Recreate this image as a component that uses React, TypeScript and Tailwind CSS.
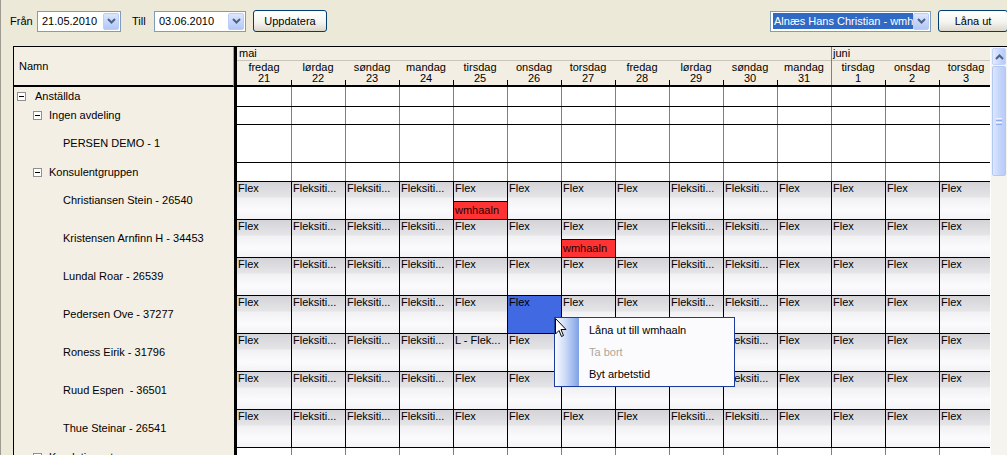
import React from 'react';

const days = [
  { name: 'fredag', num: 21 },
  { name: 'lørdag', num: 22 },
  { name: 'søndag', num: 23 },
  { name: 'mandag', num: 24 },
  { name: 'tirsdag', num: 25 },
  { name: 'onsdag', num: 26 },
  { name: 'torsdag', num: 27 },
  { name: 'fredag', num: 28 },
  { name: 'lørdag', num: 29 },
  { name: 'søndag', num: 30 },
  { name: 'mandag', num: 31 },
];

const juneDays = [
  { name: 'tirsdag', num: 1 },
  { name: 'onsdag', num: 2 },
  { name: 'torsdag', num: 3 },
];

const shifts = ['Flex', 'Fleksiti...', 'Fleksiti...', 'Fleksiti...', 'Flex', 'Flex', 'Flex', 'Flex', 'Fleksiti...', 'Fleksiti...', 'Flex', 'Flex', 'Flex', 'Flex'];

type Employee = { name: string; red?: number; selected?: number; override?: Record<number, string> };

const employees: Employee[] = [
  { name: 'Christiansen Stein - 26540', red: 4 },
  { name: 'Kristensen Arnfinn H - 34453', red: 6 },
  { name: 'Lundal Roar - 26539' },
  { name: 'Pedersen Ove - 37277', selected: 5 },
  { name: 'Roness Eirik - 31796', override: { 4: 'L - Flek...' } },
  { name: 'Ruud Espen  - 36501' },
  { name: 'Thue Steinar - 26541' },
];

function Chevron({ up }: { up?: boolean }) {
  return (
    <svg width="9" height="6" viewBox="0 0 9 6">
      <path d={up ? 'M1 5 L4.5 1.5 L8 5' : 'M1 1 L4.5 4.5 L8 1'} stroke="#4d6185" strokeWidth="2" fill="none" />
    </svg>
  );
}

function DropButton() {
  return (
    <div className="mr-px flex h-[17px] w-[16px] shrink-0 items-center justify-center rounded-[2px] border border-[#bccdf6] bg-[linear-gradient(to_bottom,#dce6fd,#c3d4fb_60%,#b3c7f6)]">
      <Chevron />
    </div>
  );
}

function Combo({ value, width }: { value: string; width: string }) {
  return (
    <div className={`flex h-[21px] shrink-0 items-center border border-[#7f9db9] bg-white pl-[4px] ${width}`}>
      <span className="flex-1 overflow-hidden whitespace-nowrap">{value}</span>
      <DropButton />
    </div>
  );
}

function XpButton({ label, width }: { label: string; width: string }) {
  return (
    <div className={`flex h-[22px] shrink-0 items-center justify-center rounded-[3px] border border-[#003c74] bg-[linear-gradient(to_bottom,#ffffff,#f4f4f0_55%,#dcd7cb)] ${width}`}>
      {label}
    </div>
  );
}

function MinusBox() {
  return (
    <div className="flex h-[9px] w-[9px] shrink-0 items-center justify-center border border-[#8f8f8f] bg-white">
      <div className="h-px w-[5px] bg-black" />
    </div>
  );
}

function DayHeader({ name, num, first }: { name: string; num: number; first?: boolean }) {
  return (
    <div className="relative flex h-[25px] w-[54px] shrink-0 flex-col items-center pt-px">
      <span className="leading-[11px]">{name}</span>
      <span className="leading-[11px]">{num}</span>
      {!first && <div className="absolute bottom-0 left-0 h-[6px] w-px bg-black" />}
    </div>
  );
}

function EmptyRow({ height, first }: { height: string; first?: boolean }) {
  return (
    <div className={`flex bg-white ${height} ${first ? '' : 'border-t border-black'}`}>
      {shifts.map((_, i) => (
        <div key={i} className={`h-full w-[54px] shrink-0 ${i === 0 ? '' : 'border-l border-[#808080]'}`} />
      ))}
    </div>
  );
}

function ShiftRow({ emp }: { emp: Employee }) {
  return (
    <div className="flex h-[38px] border-t border-black bg-[linear-gradient(to_bottom,#d4d4d8_0px,#e5e5e8_15px,#f1f1f4_16px,#fbfbfd_28px,#f3f3f6_37px)]">
      {shifts.map((s, i) => {
        const text = emp.override?.[i] ?? s;
        const selected = emp.selected === i;
        return (
          <div key={i} className={`flex h-full w-[54px] shrink-0 flex-col ${i === 0 ? '' : 'border-l border-black'} ${selected ? 'bg-[#4169e1]' : ''}`}>
            <div className="h-[19px] overflow-hidden whitespace-nowrap pl-px leading-[13px]">{text}</div>
            {emp.red === i && (
              <div className="flex flex-1 items-center border-t border-black bg-[#ff3333] pl-px text-[#2a0000]">wmhaaln</div>
            )}
          </div>
        );
      })}
    </div>
  );
}

export default function App() {
  return (
    <div className="relative h-[455px] w-[1007px] overflow-hidden border-l border-[#9d9a8f] bg-[#ece9d8] font-['Liberation_Sans',Arial,sans-serif] text-[11px] text-black">
      {/* toolbar */}
      <div className="flex h-[46px] items-start pl-[9px] pt-[10px]">
        <div className="flex h-[22px] items-center">
          <span className="w-[27px] shrink-0">Från</span>
          <Combo value="21.05.2010" width="w-[84px]" />
          <span className="ml-[11px] w-[22px] shrink-0">Till</span>
          <Combo value="03.06.2010" width="w-[92px]" />
          <div className="ml-[7px]">
            <XpButton label="Uppdatera" width="w-[74px]" />
          </div>
          <div className="ml-[443px] flex h-[21px] w-[161px] shrink-0 items-center border border-[#7f9db9] bg-white pl-[2px]">
            <span className="flex h-[16px] flex-1 items-center overflow-hidden whitespace-nowrap bg-[#316ac5] pl-px text-white">
              Alnæs Hans Christian - wmhaaln
            </span>
            <DropButton />
          </div>
          <div className="ml-[7px]">
            <XpButton label="Låna ut" width="w-[70px]" />
          </div>
        </div>
      </div>

      {/* planner grid */}
      <div className="ml-[12px] flex border-l border-t border-black">
        {/* names column */}
        <div className="w-[220px] shrink-0 bg-[#f4efe5]">
          <div className="flex h-[40px] items-center border-b-2 border-r border-b-black border-r-[#aca899] pl-[5px]">Namn</div>
          <div className="flex h-[19px] items-center gap-[9px] pl-[3px]">
            <MinusBox />
            <span>Anställda</span>
          </div>
          <div className="flex h-[18px] items-center gap-[7px] pl-[19px] pt-px">
            <MinusBox />
            <span>Ingen avdeling</span>
          </div>
          <div className="flex h-[38px] items-center pl-[49px] pt-px">PERSEN DEMO - 1</div>
          <div className="flex h-[19px] items-center gap-[7px] pl-[19px] pt-px">
            <MinusBox />
            <span>Konsulentgruppen</span>
          </div>
          {employees.map((e) => (
            <div key={e.name} className="flex h-[38px] items-center whitespace-pre pl-[49px] pt-px">
              {e.name}
            </div>
          ))}
          <div className="flex h-[19px] items-center gap-[7px] pl-[19px] pt-px">
            <MinusBox />
            <span>Kundetjeneste</span>
          </div>
        </div>

        <div className="w-[3px] shrink-0 bg-black" />

        {/* days area */}
        <div className="w-[753px] shrink-0 overflow-hidden">
          <div className="flex h-[40px] w-[756px] border-b-2 border-black bg-[#f2eee3]">
            <div className="flex flex-col">
              <div className="h-[14px] border-b border-[#c9c5b9] pl-[2px] leading-[13px]">mai</div>
              <div className="flex">
                {days.map((d, i) => (
                  <DayHeader key={`${d.name}${d.num}`} name={d.name} num={d.num} first={i === 0} />
                ))}
              </div>
            </div>
            <div className="flex flex-col border-l border-[#808080]">
              <div className="h-[14px] border-b border-[#c9c5b9] pl-px leading-[13px]">juni</div>
              <div className="-ml-px flex">
                {juneDays.map((d, i) => (
                  <DayHeader key={`${d.name}${d.num}`} name={d.name} num={d.num} first={i === 0} />
                ))}
              </div>
            </div>
          </div>
          <div className="w-[756px]">
            <EmptyRow height="h-[19px]" first />
            <EmptyRow height="h-[18px]" />
            <EmptyRow height="h-[38px]" />
            <EmptyRow height="h-[19px]" />
            {employees.map((e) => (
              <ShiftRow key={e.name} emp={e} />
            ))}
            <EmptyRow height="h-[19px]" />
          </div>
        </div>

        {/* scrollbar */}
        <div className="flex h-[410px] w-[17px] shrink-0 flex-col border-l border-[#fdfdfb] bg-[#f5f4ee] px-px pt-px">
          <div className="flex h-[17px] items-center justify-center rounded-[2px] border border-[#c3d3fb] bg-[linear-gradient(to_right,#e3ebfe,#c6d6fc_60%,#b6caf8)]">
            <Chevron up />
          </div>
          <div className="mt-px flex h-[110px] flex-col items-center justify-center gap-px rounded-[2px] border border-[#b4c8f6] bg-[linear-gradient(to_right,#dde7fe,#c6d6fc_50%,#b9cbf7)]">
            <div className="h-px w-[6px] bg-[#eef3fe]" />
            <div className="h-px w-[6px] bg-[#8faaf0]" />
            <div className="h-px w-[6px] bg-[#eef3fe]" />
            <div className="h-px w-[6px] bg-[#8faaf0]" />
          </div>
        </div>
      </div>

      {/* context menu */}
      <div className="absolute left-[553px] top-[317px] flex h-[70px] w-[181px] border border-[#1a3d99] bg-[#fbfbfe]">
        <div className="w-[24px] shrink-0 bg-[linear-gradient(to_right,#fbfcff,#c9d9f8_45%,#7ea1e6)]" />
        <div className="flex flex-1 flex-col pl-[10px] pt-px">
          <div className="flex h-[22px] items-center">Låna ut till wmhaaln</div>
          <div className="flex h-[22px] items-center text-[#aca899]">Ta bort</div>
          <div className="flex h-[22px] items-center">Byt arbetstid</div>
        </div>
      </div>

      {/* mouse pointer */}
      <svg className="absolute left-[553px] top-[317px]" width="13" height="21" viewBox="0 0 13 21">
        <path d="M1.5 1.5 V17 L5 13.5 L7.5 19.5 L9.5 18.5 L7 12.5 H12 Z" fill="white" stroke="black" strokeWidth="1" strokeLinejoin="round" />
      </svg>
    </div>
  );
}
